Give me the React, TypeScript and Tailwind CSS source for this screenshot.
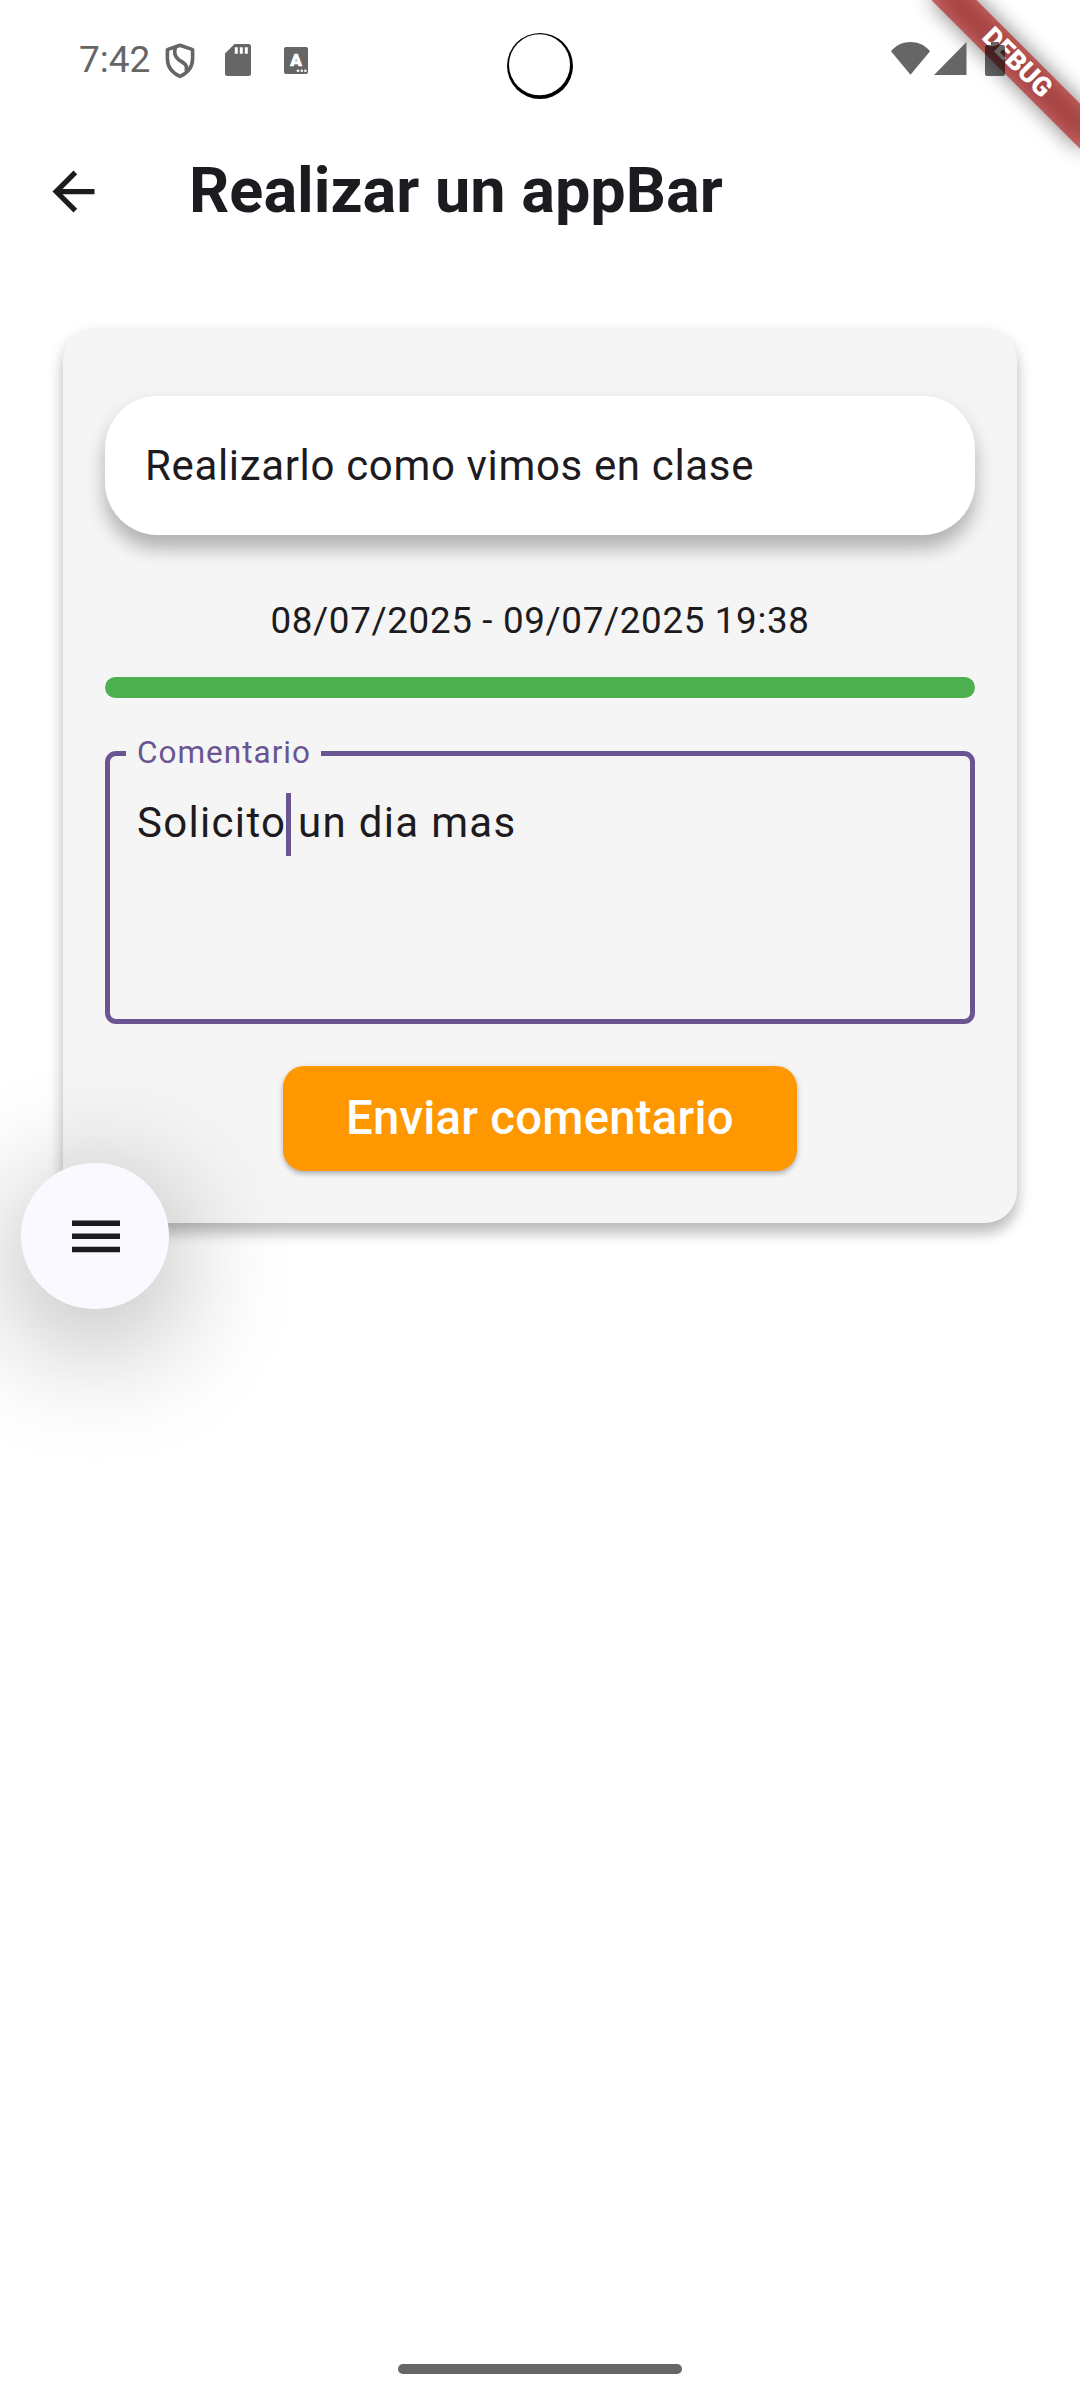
function ShieldIcon() {
  return (
    <svg width="30" height="36" viewBox="0 0 30 36" fill="none" stroke="#666" strokeWidth="3.6" strokeLinejoin="round">
      <path d="M15 2.2 L27.6 6.6 V15.5 C27.6 24 22.5 30 15 33.4 C7.500 30 2.400 24 2.400 15.500 V6.600 Z" />
      <path d="M10.500 4.500 C8.500 10 9.500 13.500 14 17 C19.500 20.500 23 22 21 28" />
    </svg>
  );
}

function SdCardIcon() {
  return (
    <svg width="26" height="32" viewBox="0 0 26 32" fill="#666">
      <path d="M9.500 0H23.500Q26 0 26 2.500V29.500Q26 32 23.500 32H2.500Q0 32 0 29.500V9.500ZM9.800 3.200V9.800H12.800V3.200ZM14.800 3.200V9.800H17.800V3.200ZM19.800 3.200V9.800H22.800V3.200Z" fillRule="evenodd" />
    </svg>
  );
}

function KeyboardBadge() {
  return (
    <svg width="24" height="27" viewBox="0 0 24 27">
      <rect width="24" height="27" rx="2" fill="#666" />
      <text x="12" y="19" textAnchor="middle" fontFamily="Roboto, sans-serif" fontWeight="900" fontSize="17" fill="#fff" stroke="#fff" strokeWidth="0.7" strokeLinejoin="round">A</text>
      <circle cx="14" cy="23.700" r="1.300" fill="#fff" />
      <circle cx="17.800" cy="23.700" r="1.300" fill="#fff" />
      <circle cx="21.400" cy="23.700" r="1.300" fill="#fff" />
    </svg>
  );
}

function StatusBar() {
  return (
    <div className="relative z-20 flex h-[118px] items-start pl-[79px]">
      <span className="mt-[35px] w-[86px] text-[37px] leading-[50px] text-[#666]">7:42</span>
      <div className="mt-[43px]"><ShieldIcon /></div>
      <div className="mt-[44px] ml-[30px]"><SdCardIcon /></div>
      <div className="mt-[46.5px] ml-[33px]"><KeyboardBadge /></div>
      <svg className="mt-[32px] ml-[198px]" width="68" height="68" viewBox="506 32 68 68">
        <circle cx="540" cy="65.900" r="33" fill="#000" />
        <circle cx="539.500" cy="64.700" r="30.500" fill="#fff" />
      </svg>
      <svg className="mt-[42px] ml-[317px]" width="39" height="33" viewBox="0 0 39 33" fill="#666">
        <path d="M19.500 32.700 L0 9.200 C10 -3 29 -3 39 9.200 Z" />
      </svg>
      <svg className="mt-[42px] ml-[3.500px]" width="33" height="33" viewBox="0 0 33 33" fill="#666">
        <path d="M32.500 0V33H0Z" />
      </svg>
      <svg className="mt-[42px] ml-[18.500px]" width="20" height="34" viewBox="0 0 20 34">
        <path d="M6 0H14V3H18Q20 3 20 5V32Q20 34 18 34H2Q0 34 0 32V5Q0 3 2 3H6Z" fill="#000" fillOpacity="0.6" />
      </svg>
    </div>
  );
}

function DebugBanner() {
  return (
    <div className="pointer-events-none absolute top-0 right-0 z-10 h-[200px] w-[240px] overflow-hidden">
      <div className="absolute top-[47.35px] right-[-41.9px] h-[31.5px] w-[210px] rotate-45">
        <div className="absolute inset-0 bg-black/50 blur-[10.4px]" />
        <div className="absolute inset-0 flex items-center justify-center bg-[#b71c1c]/63 text-[26.8px] leading-[31.5px] font-black text-white">
          DEBUG
        </div>
      </div>
    </div>
  );
}

function AppBar() {
  return (
    <header className="flex h-[147px] items-center">
      <svg className="ml-[42px]" width="63" height="63" viewBox="0 0 24 24" fill="#1d1b20">
        <path d="M20 11H7.830l5.590-5.590L12 4l-8 8 8 8 1.410-1.410L7.830 13H20v-2z" />
      </svg>
      <h1 className="mb-[2px] ml-[84px] text-[63px] leading-[80px] font-bold whitespace-nowrap text-[#1d1b20]">Realizar un appBar</h1>
    </header>
  );
}

function CommentField() {
  return (
    <div className="relative mt-[53px] h-[273px] rounded-[11px] border-[5px] border-[#6a5592] pt-[35px] pl-[27px]">
      <span className="absolute top-[-28px] left-[16px] w-[195px] bg-[#f5f5f5] pl-[11px] text-[31.5px] leading-[50px] tracking-[1px] text-[#6a5592]">
        Comentario
      </span>
      <p className="text-[42px] leading-[63px] tracking-[1.312px] whitespace-nowrap">
        Solicito
        <span className="relative inline-block h-0 w-0">
          <span className="absolute top-[-44px] left-0 h-[63px] w-[5px] bg-[#6a5592]" />
        </span>{' '}
        un dia mas
      </p>
    </div>
  );
}

function TaskCard() {
  return (
    <section className="mx-[63px] mt-[63px] h-[895px] rounded-[32px] bg-[#f5f5f5] px-[42px] pt-[68px] text-[#1d1b20] shadow-[0_10px_14px_rgba(0,0,0,0.23),0_5px_20px_rgba(0,0,0,0.07)]">
      <div className="flex h-[139px] items-center rounded-[52.5px] bg-white pl-[40px] text-[42px] leading-[63px] tracking-[0.656px] shadow-[0_14px_18px_rgba(0,0,0,0.24),0_7px_28px_rgba(0,0,0,0.06)]">
        Realizarlo como vimos en clase
      </div>
      <p className="mt-[61px] text-center text-[36.75px] leading-[50px] tracking-[0.656px]">08/07/2025 - 09/07/2025 19:38</p>
      <div className="mt-[31px] h-[21px] rounded-full bg-[#4caf50]" />
      <CommentField />
      <button className="mx-auto mt-[42px] flex h-[105px] w-[514px] items-center justify-center rounded-[21px] bg-[#ff9800] text-[47.25px] font-medium tracking-[0.26px] text-white shadow-[0_3px_5px_rgba(0,0,0,0.24),0_1px_8px_rgba(0,0,0,0.06)]">
        Enviar comentario
      </button>
    </section>
  );
}

export default function App() {
  return (
    <div className="relative h-[2400px] w-[1080px] overflow-hidden bg-white font-['Roboto',sans-serif]">
      <StatusBar />
      <DebugBanner />
      <AppBar />
      <TaskCard />
      <button className="absolute top-[1163px] left-[21px] flex h-[146px] w-[148px] items-center justify-center rounded-full bg-[#f9f9ff] pl-[1px] shadow-[0_28px_125px_5px_rgba(0,0,0,0.32)]">
        <svg width="48" height="33" viewBox="0 0 48 33" fill="#1d1b20">
          <path d="M0 .5H48V6H0ZM0 13.500H48V19H0ZM0 26.800H48V32.300H0Z" />
        </svg>
      </button>
      <div className="absolute bottom-[26px] left-[398px] h-[10px] w-[284px] rounded-full bg-[#666]" />
    </div>
  );
}
